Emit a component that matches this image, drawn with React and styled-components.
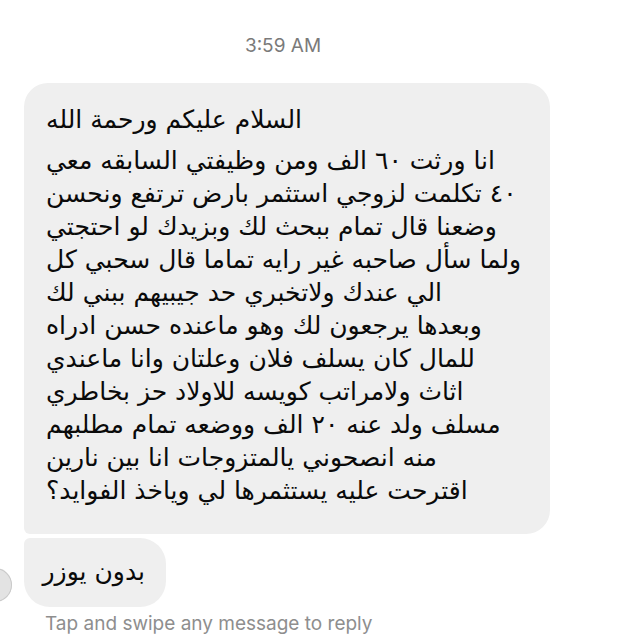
import styled, { createGlobalStyle } from 'styled-components';

const GlobalStyle = createGlobalStyle`
  html, body {
    margin: 0;
    padding: 0;
    background: #fff;
  }
  body {
    font-family: "Inter", "Roboto", sans-serif;
  }
`;

const Screen = styled.div`
  width: 640px;
  height: 640px;
  overflow: hidden;
  background: #fff;
  display: flex;
  flex-direction: column;
`;

const TimeStamp = styled.div`
  padding: 34px 74px 25px 0;
  text-align: center;
  font-size: 19px;
  line-height: 24px;
  color: #7a7a7a;
`;

const Thread = styled.div`
  display: flex;
  flex-direction: column;
  gap: 4px;
  padding-left: 24px;
`;

const Row = styled.div`
  display: flex;
  align-items: flex-end;
`;

const Avatar = styled.div`
  width: 34px;
  height: 34px;
  flex: none;
  border-radius: 50%;
  margin-left: -46px;
  margin-right: 12px;
  margin-bottom: 5px;
  background: #e3e3e3;
  box-shadow: inset 0 0 0 1px #c9c9c9;
`;

const Bubble = styled.div`
  background: #efefef;
  color: #0a0a0a;
  font-family: "DejaVu Sans", sans-serif;
  font-size: 25px;
  line-height: 33px;
  text-align: left;
  border-radius: ${(p) =>
    p.$pos === 'first' ? '24px 24px 24px 6px' : '6px 26px 26px 26px'};
  padding: ${(p) => p.$pad};
  width: ${(p) => p.$width};
  box-sizing: border-box;
`;

const Line = styled.div`
  white-space: nowrap;
  text-align: left;
  margin-bottom: ${(p) => (p.$gap ? '8px' : '0')};
`;

const Hint = styled.div`
  padding: 6px 0 0 45px;
  font-size: 19px;
  line-height: 22px;
  color: #8e8e8e;
`;

const lines = [
  'انا ورثت ٦٠ الف ومن وظيفتي السابقه معي',
  '٤٠ تكلمت لزوجي استثمر بارض ترتفع ونحسن',
  'وضعنا قال تمام ببحث لك وبزيدك لو احتجتي',
  'ولما سأل صاحبه غير رايه تماما قال سحبي كل',
  'الي عندك ولاتخبري حد جيبيهم ببني لك',
  'وبعدها يرجعون لك وهو ماعنده حسن ادراه',
  'للمال كان يسلف فلان وعلتان وانا ماعندي',
  'اثاث ولامراتب كويسه للاولاد حز بخاطري',
  'مسلف ولد عنه ٢٠ الف ووضعه تمام مطلبهم',
  'منه انصحوني يالمتزوجات انا بين نارين',
  'اقترحت عليه يستثمرها لي وياخذ الفوايد؟',
];

export default function App() {
  return (
    <Screen>
      <GlobalStyle />
      <TimeStamp>3:59 AM</TimeStamp>
      <Thread>
        <Row>
          <Bubble $pos="first" $pad="20px 22px 27px 22px" $width="526px">
            <Line dir="rtl" $gap>السلام عليكم ورحمة الله</Line>
            {lines.map((l, i) => (
              <Line key={i} dir="rtl">
                {l}
              </Line>
            ))}
          </Bubble>
        </Row>
        <Row>
          <Avatar />
          <Bubble $pos="last" $pad="17px 21px 19px 23px" $width="142px">
            <Line dir="rtl">بدون يوزر</Line>
          </Bubble>
        </Row>
      </Thread>
      <Hint>Tap and swipe any message to reply</Hint>
    </Screen>
  );
}
